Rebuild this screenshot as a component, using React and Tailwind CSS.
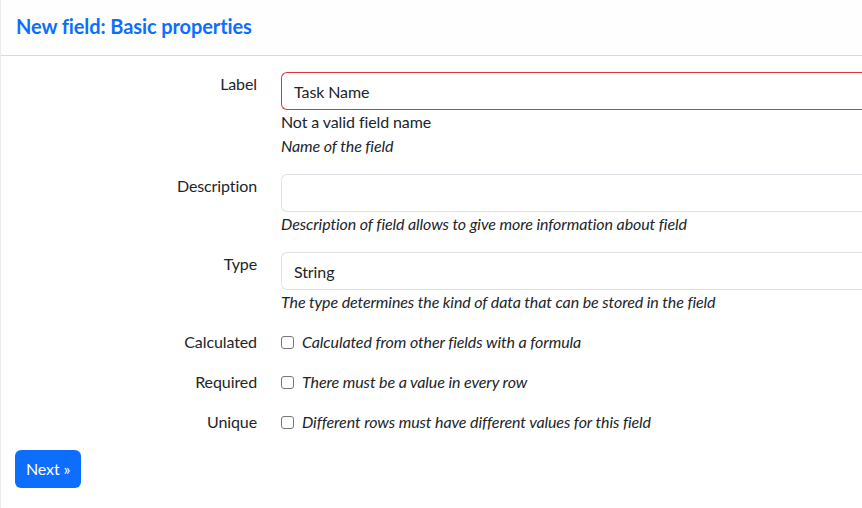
import { useState } from 'react';

const font = { fontFamily: 'Lato, "Noto Sans", sans-serif' };

const CheckRow = ({ label, text, checked, onChange }) => (
  <>
    <div className="text-right leading-6">{label}</div>
    <label className="flex items-center gap-2 leading-6">
      <input
        type="checkbox"
        checked={checked}
        onChange={onChange}
        className="h-[13px] w-[13px] appearance-none rounded-[3px] border border-[#767676] bg-white"
      />
      <span className="italic">{text}</span>
    </label>
  </>
);

const App = () => {
  const [form, setForm] = useState({
    label: 'Task Name',
    description: '',
    type: 'String',
    calculated: false,
    required: false,
    unique: false,
  });

  const toggle = (key) => () => setForm((prev) => ({ ...prev, [key]: !prev[key] }));

  return (
    <div
      className="min-h-[508px] w-[862px] overflow-hidden border-l border-[#ececec] bg-white text-[16px] tracking-[-0.1px] text-[#212529]"
      style={font}
    >
      <div className="flex h-[56px] items-center border-b border-[#d9d9d9] bg-[#fefefe] pb-[4px] pl-[15px]">
        <h5 className="text-[20px] font-bold tracking-[-0.1px] text-[#0d6efd]">New field: Basic properties</h5>
      </div>
      <form className="pt-4 pl-[14px]" onSubmit={(e) => e.preventDefault()}>
        <div className="grid grid-cols-[242px_1fr] gap-x-6 gap-y-4">
          <div className="text-right leading-6">Label</div>
          <div>
            <input
              className="h-[38px] w-full rounded-l-[6px] border border-r-0 border-[#dc3545] px-3 outline-none"
              value={form.label}
              onChange={(e) => setForm((prev) => ({ ...prev, label: e.target.value }))}
            />
            <div className="leading-6">Not a valid field name</div>
            <div className="italic leading-6">Name of the field</div>
          </div>

          <div className="text-right leading-6">Description</div>
          <div>
            <input
              className="h-[38px] w-full rounded-l-[6px] border border-r-0 border-[#dee2e6] px-3 outline-none"
              value={form.description}
              onChange={(e) => setForm((prev) => ({ ...prev, description: e.target.value }))}
            />
            <div className="italic leading-6">Description of field allows to give more information about field</div>
          </div>

          <div className="text-right leading-6">Type</div>
          <div>
            <input
              className="h-[38px] w-full rounded-l-[6px] border border-r-0 border-[#dee2e6] px-3 outline-none"
              value={form.type}
              onChange={(e) => setForm((prev) => ({ ...prev, type: e.target.value }))}
            />
            <div className="italic leading-6">The type determines the kind of data that can be stored in the field</div>
          </div>

          <CheckRow
            label="Calculated"
            text="Calculated from other fields with a formula"
            checked={form.calculated}
            onChange={toggle('calculated')}
          />
          <CheckRow
            label="Required"
            text="There must be a value in every row"
            checked={form.required}
            onChange={toggle('required')}
          />
          <CheckRow
            label="Unique"
            text="Different rows must have different values for this field"
            checked={form.unique}
            onChange={toggle('unique')}
          />
        </div>
        <button
          type="submit"
          className="mt-4 h-[38px] rounded-[6px] bg-[#0d6efd] px-[11px] leading-6 text-white"
        >
          Next »
        </button>
      </form>
    </div>
  );
};

export default App;
